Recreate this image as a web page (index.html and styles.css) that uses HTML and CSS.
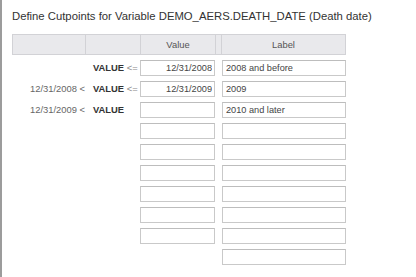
FILE: index.html
```html
<!DOCTYPE html>
<html>
<head>
<meta charset="utf-8">
<link rel="stylesheet" href="styles.css">
</head>
<body>
<div class="dialog">
  <h1 class="title">Define Cutpoints for Variable DEMO_AERS.DEATH_DATE (Death date)</h1>
  <div class="grid head">
    <div class="hc"></div>
    <div class="hc"></div>
    <div class="hc">Value</div>
    <div class="hc"></div>
    <div class="hc">Label</div>
  </div>
  <div class="grid body">
    <div class="lo"></div>
    <div class="op"><b>VALUE</b> <span class="le">&lt;=</span></div>
    <div class="val"><input class="inp num" value="12/31/2008"></div>
    <div></div>
    <div class="lab"><input class="inp" value="2008 and before"></div>

    <div class="lo">12/31/2008 &lt;</div>
    <div class="op"><b>VALUE</b> <span class="le">&lt;=</span></div>
    <div class="val"><input class="inp num" value="12/31/2009"></div>
    <div></div>
    <div class="lab"><input class="inp" value="2009"></div>

    <div class="lo">12/31/2009 &lt;</div>
    <div class="op"><b>VALUE</b></div>
    <div class="val"><input class="inp num" value=""></div>
    <div></div>
    <div class="lab"><input class="inp" value="2010 and later"></div>

    <div></div><div></div><div class="val"><input class="inp num"></div><div></div><div class="lab"><input class="inp"></div>
    <div></div><div></div><div class="val"><input class="inp num"></div><div></div><div class="lab"><input class="inp"></div>
    <div></div><div></div><div class="val"><input class="inp num"></div><div></div><div class="lab"><input class="inp"></div>
    <div></div><div></div><div class="val"><input class="inp num"></div><div></div><div class="lab"><input class="inp"></div>
    <div></div><div></div><div class="val"><input class="inp num"></div><div></div><div class="lab"><input class="inp"></div>
    <div></div><div></div><div class="val"><input class="inp num"></div><div></div><div class="lab"><input class="inp"></div>
    <div></div><div></div><div></div><div></div><div class="lab"><input class="inp"></div>
  </div>
</div>
</body>
</html>
```

FILE: styles.css
```css
html, body {
  margin: 0;
  padding: 0;
  background: #fff;
}
body {
  width: 416px;
  height: 277px;
  overflow: hidden;
  font-family: "Liberation Sans", Arial, sans-serif;
}
.dialog {
  height: 277px;
  box-sizing: border-box;
  border-left: 2px solid #9c9c9c;
  padding: 0 0 0 10px;
}
.title {
  margin: 0;
  padding-top: 9px;
  height: 34px;
  box-sizing: border-box;
  font-size: 11.3px;
  font-weight: normal;
  color: #333;
  line-height: 14px;
  white-space: nowrap;
}
.grid {
  display: grid;
  grid-template-columns: 73px 55px 75px 6px 125px;
}
.head {
  height: 21px;
}
.hc {
  background: #e9e9ec;
  border: 1px solid #d2d2d6;
  border-right: none;
  font-size: 9.4px;
  color: #555;
  text-align: center;
  line-height: 19px;
}
.hc:last-child {
  border-right: 1px solid #d2d2d6;
}
.body {
  margin-top: 5px;
  grid-auto-rows: 16px;
  row-gap: 5px;
}
.lo, .op {
  font-size: 9.4px;
  line-height: 16px;
  color: #666;
  white-space: nowrap;
}
.lo {
  text-align: right;
  padding-right: 0;
}
.op {
  padding-left: 8px;
}
.op b {
  color: #333;
}
.le {
  color: #888;
}
.val, .lab {
  display: flex;
}
.lab {
  padding-left: 1px;
}
.inp {
  box-sizing: border-box;
  width: 100%;
  height: 16px;
  margin: 0;
  padding: 0 2px 0 3px;
  border: 1px solid #c9c9c9;
  border-top-color: #bdbdbd;
  font-family: "Liberation Sans", Arial, sans-serif;
  font-size: 9.2px;
  color: #444;
  background: #fff;
  outline: none;
}
.val .inp {
  width: 75px;
}
.lab .inp {
  width: 124px;
}
.num {
  text-align: right;
}
```
